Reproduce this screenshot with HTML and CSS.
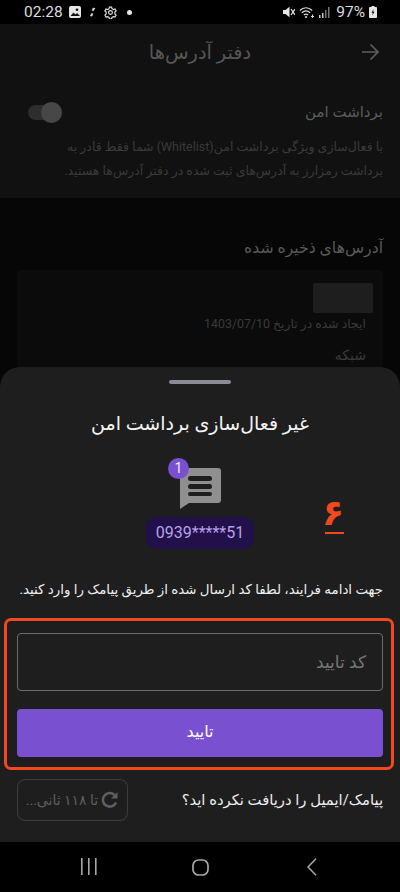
FILE: index.html
```html
<!DOCTYPE html>
<html lang="fa">
<head>
    <meta charset="UTF-8">
    <title>دفتر آدرس‌ها</title>
    <link rel="stylesheet" href="styles.css">
</head>
<body>
<div class="screen">
    <div class="status-bar">
        <div class="status-left">
            <span class="time">02:28</span>
            <svg width="12" height="12" viewBox="0 0 12 12"><rect width="12" height="12" rx="2" fill="#e6e6e6"/><path d="M1.5 10l3-3.5 2 2 1.500-1.500 3 3z" fill="#111"/><circle cx="8" cy="3.800" r="1.300" fill="#111"/></svg>
            <svg width="7" height="12" viewBox="0 0 8 12"><path d="M7 1.500L4.500 1 3 4l2 1 2-3zM1 10.500l2.500.5L5 8 3 7z" fill="#d0d0d0"/></svg>
            <svg width="13" height="13" viewBox="0 0 24 24" fill="none" stroke="#e0e0e0" stroke-width="2.200"><circle cx="12" cy="12" r="3.500"/><path d="M10 2h4l.7 3 2.700 1.500 2.900-.9 2 3.400-2.200 2.100v3.800l2.200 2.100-2 3.400-2.900-.9-2.700 1.500-.7 3h-4l-.7-3-2.700-1.500-2.900.9-2-3.400 2.200-2.100v-3.800L1.700 9l2-3.400 2.900.9L9.300 5z"/></svg>
            <span class="status-dot"></span>
        </div>
        <div class="status-right">
            <svg width="12" height="12" viewBox="0 0 12 12"><path d="M0 4h2.500L6.500 .8v10.400L2.500 8H0z" fill="#e6e6e6"/><path d="M8 3l4 6M12 3L8 9" stroke="#e6e6e6" stroke-width="1.300"/></svg>
            <svg class="wifi" width="16" height="13" viewBox="0 0 16 13" fill="none" stroke="#dcdcdc" stroke-width="1.200"><path d="M.8 4.500C4.500 .8 9.500 .8 13.200 4.500M2.800 6.800c2.600-2.500 5.800-2.500 8.400 0M4.900 9c1.300-1.200 2.900-1.200 4.200 0"/><circle cx="7" cy="11" r="1.100" fill="#dcdcdc" stroke="none"/><path d="M13.500 8.500v3.500M12 10.500h3" stroke-width="1"/></svg>
            <svg class="signal" width="11" height="11" viewBox="0 0 11 11"><rect x="0" y="8" width="1.500" height="3" fill="#cfcfcf"/><rect x="3" y="6" width="1.500" height="5" fill="#cfcfcf"/><rect x="6" y="3" width="1.500" height="8" fill="#777"/><rect x="9" y="0" width="1.500" height="11" fill="#777"/></svg>
            <span class="battery-text">97%</span>
            <svg width="8" height="12" viewBox="0 0 8 12"><path d="M2.500 0h3v1H7a1 1 0 0 1 1 1v9a1 1 0 0 1-1 1H1a1 1 0 0 1-1-1V2a1 1 0 0 1 1-1h1.500z" fill="#e6e6e6"/><path d="M4.600 3L2.500 6.800h1.300L3.400 9.500l2.100-3.800H4.200z" fill="#111"/></svg>
        </div>
    </div>

    <div class="page">
        <div class="top-block">
            <header class="app-header">
                <svg class="back-icon" width="18" height="18" viewBox="0 0 18 18" fill="none" stroke="#5e5e5e" stroke-width="1.600"><path d="M1 9h16M9.500 1.500L17 9l-7.500 7.500"/></svg>
                <h1>دفتر آدرس‌ها</h1>
            </header>
            <div class="safe-row">
                <span class="safe-title">برداشت امن</span>
                <span class="toggle"><span class="toggle-knob"></span></span>
            </div>
            <p class="safe-desc">با فعال‌سازی ویژگی برداشت امن(Whitelist) شما فقط قادر به<br>برداشت رمزارز به آدرس‌های ثبت شده در دفتر آدرس‌ها هستید.</p>
        </div>
        <h2 class="saved-title">آدرس‌های ذخیره شده</h2>
        <div class="address-card">
            <div class="skeleton"></div>
            <div class="created">ایجاد شده در تاریخ 1403/07/10</div>
            <div class="network">شبکه</div>
        </div>
    </div>

    <div class="sheet">
        <div class="handle"></div>
        <div class="sheet-title">غیر فعال‌سازی برداشت امن</div>
        <div class="sms-block">
            <div class="sms-icon">
                <svg width="42" height="42" viewBox="0 0 42 42"><path d="M3 1h36a3 3 0 0 1 3 3v29a3 3 0 0 1-3 3H10L1 42V3a2 2 0 0 1 2-2z" fill="#8f8f8f"/><rect x="9" y="9" width="24" height="5" rx="2.500" fill="#1e1e1e"/><rect x="9" y="17" width="24" height="5" rx="2.500" fill="#1e1e1e"/><rect x="9" y="25" width="24" height="4" rx="2" fill="#1e1e1e"/></svg>
                <span class="sms-badge">1</span>
            </div>
            <div class="phone-pill">0939*****51</div>
            <div class="step-mark">۶</div>
        </div>
        <p class="sheet-desc">جهت ادامه فرایند، لطفا کد ارسال شده از طریق پیامک را وارد کنید.</p>
        <div class="highlight">
            <div class="code-input">کد تایید</div>
            <div class="confirm-btn">تایید</div>
        </div>
        <div class="resend-row">
            <span class="resend-text">پیامک/ایمیل را دریافت نکرده اید؟</span>
            <div class="resend-btn">
                <svg width="18" height="18" viewBox="0 0 18 18" fill="none" stroke="#5f5f5f" stroke-width="2.600"><path d="M15 11.500A6.800 6.800 0 1 1 13.500 4"/><path d="M16.500 1v6.500H10" fill="#5f5f5f" stroke="none"/></svg>
                <span>تا ۱۱۸ ثانی...</span>
            </div>
        </div>
    </div>

    <nav class="nav-bar">
        <svg width="16" height="18" viewBox="0 0 16 18" fill="#a8a8a8"><rect x="0" y="0" width="1.600" height="17"/><rect x="7" y="0" width="1.600" height="17"/><rect x="14" y="0" width="1.600" height="17"/></svg>
        <svg class="nav-home" width="17" height="17" viewBox="0 0 17 17" fill="none" stroke="#a8a8a8" stroke-width="1.700"><rect x="1" y="1" width="15" height="15" rx="5.500"/></svg>
        <svg width="10" height="18" viewBox="0 0 10 18" fill="none" stroke="#a8a8a8" stroke-width="1.600"><path d="M9 .8L1 9l8 8.200"/></svg>
    </nav>
</div>
</body>
</html>
```

FILE: styles.css
```css
* {
    box-sizing: border-box;
}

body {
    margin: 0;
    font-family: Roboto, "DejaVu Sans", sans-serif;
    background: #000;
}

.screen {
    position: relative;
    width: 400px;
    height: 892px;
    overflow: hidden;
    display: flex;
    flex-direction: column;
    background: #060606;
}

.status-bar {
    height: 24px;
    padding: 0 23px 0 24px;
    display: flex;
    justify-content: space-between;
    align-items: center;
    background: #000;
    direction: ltr;
}

.status-left,
.status-right {
    display: flex;
    align-items: center;
}

.status-left {
    gap: 8px;
}

.status-left .time {
    margin-right: -2px;
}

.status-right {
    gap: 4px;
}

.time,
.battery-text {
    font-size: 15.500px;
    color: #dcdcdc;
}

.battery-text {
    margin-left: 2px;
}

.status-dot {
    width: 5px;
    height: 5px;
    margin-left: 2px;
    border-radius: 50%;
    background: #e6e6e6;
}

.page {
    flex: 1;
    direction: rtl;
}

.top-block {
    height: 174px;
    background: #111;
    padding: 0 17px;
}

.app-header {
    position: relative;
    height: 56px;
    display: flex;
    align-items: center;
    justify-content: center;
}

.app-header h1 {
    margin: 0;
    font-size: 19.400px;
    font-weight: 400;
    color: #565656;
}

.back-icon {
    position: absolute;
    right: 4px;
    top: 19px;
}

.safe-row {
    height: 22px;
    margin-top: 21px;
    display: flex;
    justify-content: space-between;
    align-items: center;
}

.safe-title {
    font-size: 15px;
    color: #5c5c5c;
}

.toggle {
    position: relative;
    width: 34px;
    height: 15px;
    margin-left: 11px;
    border-radius: 8px;
    background: #2d2d2d;
}

.toggle-knob {
    position: absolute;
    left: 13px;
    top: -3px;
    width: 21px;
    height: 21px;
    border-radius: 50%;
    background: #474747;
}

.safe-desc {
    margin: 12px 0 0;
    font-size: 12.500px;
    line-height: 24px;
    color: #3a3a3a;
}

.saved-title {
    margin: 38px 17px 0;
    font-size: 15.700px;
    font-weight: 400;
    line-height: 24px;
    color: #595959;
}

.address-card {
    margin: 10px 17px 0;
    height: 200px;
    padding: 13px 17px 0;
    border-radius: 4px;
    background: #0b0b0b;
}

.skeleton {
    width: 60px;
    height: 30px;
    margin-right: -7px;
    border-radius: 2px;
    background: #1e1e1e;
}

.created {
    margin-top: 2px;
    font-size: 12.400px;
    line-height: 18px;
    color: #3a3a3a;
}

.network {
    margin-top: 12px;
    font-size: 14px;
    line-height: 20px;
    color: #3a3a3a;
}

.sheet {
    position: absolute;
    left: 0;
    right: 0;
    top: 367px;
    height: 475px;
    border-radius: 20px 20px 0 0;
    background: #1e1e1e;
    direction: rtl;
}

.handle {
    width: 62px;
    height: 4px;
    margin: 13px auto 0;
    border-radius: 2px;
    background: #8b8b96;
}

.sheet-title {
    margin-top: 28px;
    font-size: 19px;
    line-height: 24px;
    text-align: center;
    color: #f4f4f4;
}

.sms-block {
    position: relative;
    margin-top: 31px;
    display: flex;
    flex-direction: column;
    align-items: center;
}

.sms-icon {
    position: relative;
    width: 42px;
    height: 42px;
}

.sms-badge {
    position: absolute;
    left: -11px;
    top: -9px;
    width: 21px;
    height: 21px;
    border-radius: 50%;
    background: #7950d0;
    color: #eee;
    font-size: 14px;
    line-height: 21px;
    text-align: center;
}

.phone-pill {
    width: 108px;
    height: 32px;
    margin-top: 8px;
    border-radius: 10px;
    background: #21104a;
    color: #b9a0e8;
    font-size: 16px;
    line-height: 32px;
    text-align: center;
    direction: ltr;
}

.step-mark {
    position: absolute;
    left: 325px;
    top: 25px;
    width: 19px;
    height: 42px;
    border-bottom: 2px solid #f4481f;
    color: #f4481f;
    font-size: 36px;
    font-weight: 700;
    line-height: 42px;
    text-align: center;
}

.sheet-desc {
    margin: 31px 17px 0;
    font-size: 13.400px;
    line-height: 20px;
    color: #eee;
}

.highlight {
    margin: 18px 6px 0 4px;
    padding: 12px 8px 10px 10px;
    height: 152px;
    border: 3px solid #f4481f;
    border-radius: 7px;
}

.code-input {
    height: 58px;
    padding: 0 16px;
    border: 1px solid #6b6b6b;
    border-radius: 4px;
    font-size: 17px;
    line-height: 56px;
    color: #777;
}

.confirm-btn {
    height: 48px;
    margin-top: 18px;
    border-radius: 4px;
    background: #7950d0;
    color: #fff;
    font-size: 16px;
    line-height: 46px;
    text-align: center;
}

.resend-row {
    margin: 9px 17px 0;
    display: flex;
    justify-content: space-between;
    align-items: center;
}

.resend-text {
    font-size: 14.800px;
    color: #eee;
}

.resend-btn {
    width: 111px;
    height: 42px;
    display: flex;
    align-items: center;
    justify-content: center;
    gap: 3px;
    border: 1px solid #3d3d3d;
    border-radius: 8px;
    color: #5f5f5f;
    font-size: 14px;
    white-space: nowrap;
}

.nav-bar {
    position: absolute;
    left: 0;
    right: 0;
    bottom: 0;
    height: 50px;
    display: flex;
    align-items: center;
    justify-content: space-between;
    padding: 0 83px 0 81px;
    background: #000;
}

.nav-home {
    margin-right: 3px;
}
```
